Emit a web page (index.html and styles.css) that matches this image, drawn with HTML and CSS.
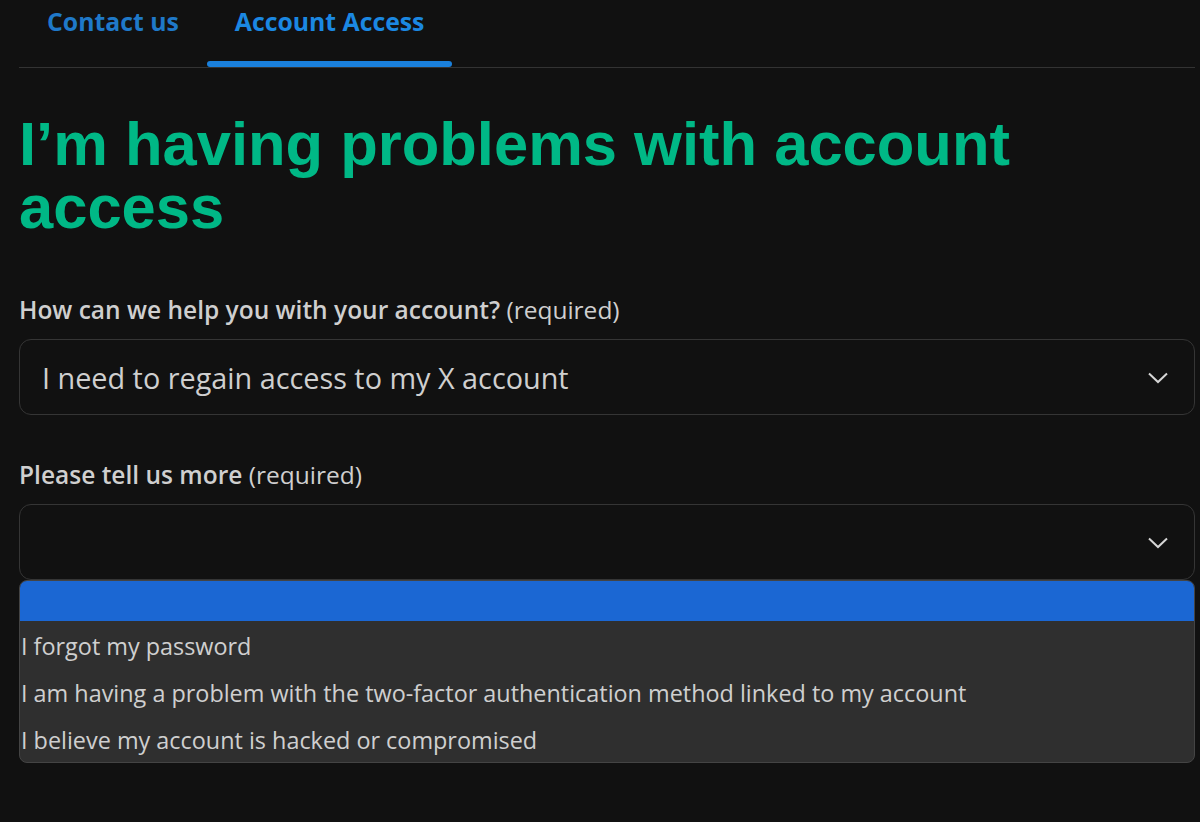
FILE: index.html
```html
<!DOCTYPE html>
<html lang="en">
<head>
<meta charset="UTF-8">
<title>Account Access</title>
<link rel="stylesheet" href="styles.css">
</head>
<body>

<div class="page">
  <nav class="tabs">
    <a class="tab">Contact us</a>
    <a class="tab active">Account Access</a>
  </nav>

  <h1 class="title">I’m having problems with account access</h1>

  <div class="field">
    <label class="field-label"><b>How can we help you with your account?</b> (required)</label>
    <div class="select">
      <span>I need to regain access to my X account</span>
      <svg class="chevron" viewBox="0 0 24 24"><path d="M3 8.5l9 8.5 9-8.5"/></svg>
    </div>
  </div>

  <div class="field">
    <label class="field-label"><b>Please tell us more</b> (required)</label>
    <div class="select open">
      <span></span>
      <svg class="chevron" viewBox="0 0 24 24"><path d="M3 8.5l9 8.5 9-8.5"/></svg>
    </div>
    <ul class="options">
      <li class="selected"></li>
      <li>I forgot my password</li>
      <li>I am having a problem with the two-factor authentication method linked to my account</li>
      <li>I believe my account is hacked or compromised</li>
    </ul>
  </div>
</div>

</body>
</html>
```

FILE: styles.css
```css
body {
  margin: 0;
  background: #111111;
  color: #d2d2d2;
  font-family: 'Open Sans', 'Noto Sans', sans-serif;
}

.page {
  padding: 0 5px 0 19px;
}

/* tabs */
.tabs {
  display: flex;
  border-bottom: 1px solid #333;
}

.tab {
  position: relative;
  box-sizing: border-box;
  height: 67px;
  padding: 4px 28px 0;
  font-size: 24.8px;
  font-weight: 700;
  color: #1f79c9;
}

.tab.active { color: #1b88e2; }

.tab.active::after {
  content: "";
  position: absolute;
  left: 0;
  right: 0;
  bottom: 0;
  height: 6px;
  border-radius: 3px;
  background: #1a80dc;
}

.title {
  margin: 44px 0 0;
  font-family: 'Liberation Sans', Arial, sans-serif;
  font-size: 61.5px;
  line-height: 63px;
  font-weight: 700;
  color: #00b886;
}

.field { margin-top: 55px; }
.field + .field { margin-top: 43px; }

.field-label {
  display: block;
  font-size: 24.5px;
  color: #cfcfcf;
  margin-bottom: 13px;
}

.field-label b { font-weight: 600; }

.select {
  display: flex;
  align-items: center;
  justify-content: space-between;
  height: 74px;
  padding: 0 24px 0 22px;
  border: 1px solid #353535;
  border-radius: 12px;
  font-size: 28.8px;
  color: #cfcfcf;
}

.chevron {
  width: 24px;
  height: 24px;
  fill: none;
  stroke: #d6d6d6;
  stroke-width: 2;
}

.options {
  list-style: none;
  margin: 0;
  padding: 0;
  background: #2f2f2f;
  border: 1px solid #444;
  border-radius: 8px;
  overflow: hidden;
  font-size: 23.4px;
  color: #cfcfcf;
}

.options li {
  height: 47px;
  line-height: 51px;
  padding-left: 1px;
}

.options li.selected {
  height: 40px;
  background: #1b67d3;
}
```
